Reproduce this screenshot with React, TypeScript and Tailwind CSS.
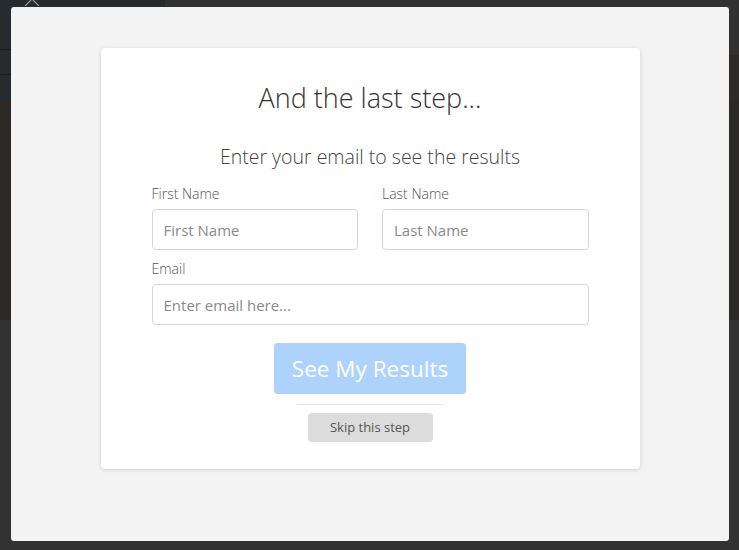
import React from "react";

const font = { fontFamily: '"Open Sans", "Noto Sans", sans-serif' };

function Field({ label, placeholder }: { label: string; placeholder: string }) {
  return (
    <div className="flex flex-col">
      <label className="text-[14px] leading-[18px] text-[#555] font-light mb-[6px]">{label}</label>
      <input
        type="text"
        placeholder={placeholder}
        className="h-[41px] w-full rounded-[4px] border border-[#d6d6d6] bg-white px-[11px] text-[15px] text-[#333] placeholder:text-[#8a8a8a] outline-none"
      />
    </div>
  );
}

export default function App() {
  return (
    <div className="relative h-[550px] w-full overflow-hidden bg-[#323232]" style={font}>
      {/* page behind the overlay */}
      <div className="flex h-[100px]">
        <div className="w-[165px] bg-[#262b2f] flex flex-col">
          <div className="h-[20px] pl-[24px]">
            <svg width="16" height="6" viewBox="0 0 16 6" fill="none">
              <path d="M1 6 L8 -1 L15 6" stroke="#8d9398" strokeWidth="1.3" />
            </svg>
          </div>
          <div className="h-[30px] border-b border-[#1c2023]" />
          <div className="h-[25px] border-b border-[#1c2023]" />
        </div>
        <div className="flex-1 flex flex-col">
          <div className="h-[55px] bg-[#313131]" />
          <div className="flex-1 bg-[#2e2a27]" />
        </div>
      </div>
      <div className="h-[220px] bg-[#2c2a27]" />

      {/* modal */}
      <div className="absolute left-[11px] top-[7px] h-[534px] w-[718px] rounded-[3px] bg-[#f3f3f3] pt-[41px]">
        <div className="mx-auto h-[421px] w-[539px] rounded-[4px] bg-white shadow-[0_1px_4px_rgba(0,0,0,0.14)] px-[51px] pt-[32px]">
          <h1 className="text-center text-[27px] leading-[36px] font-light text-[#333]">And the last step...</h1>
          <p className="mt-[28px] text-center text-[19.5px] leading-[26px] font-light text-[#444]">
            Enter your email to see the results
          </p>
          <div className="mt-[15px] grid grid-cols-2 gap-x-[24px]">
            <Field label="First Name" placeholder="First Name" />
            <Field label="Last Name" placeholder="Last Name" />
          </div>
          <div className="mt-[10px]">
            <Field label="Email" placeholder="Enter email here..." />
          </div>
          <div className="mt-[18px] flex flex-col items-center">
            <button className="h-[51px] w-[192px] rounded-[4px] bg-[#add3fd] text-[22.5px] text-white">
              See My Results
            </button>
            <div className="mt-[10px] h-px w-[146px] bg-[#e2e2e2]" />
            <button className="mt-[8px] h-[29px] w-[125px] rounded-[4px] bg-[#dcdcdc] text-[13px] text-[#555]">
              Skip this step
            </button>
          </div>
        </div>
      </div>
    </div>
  );
}
